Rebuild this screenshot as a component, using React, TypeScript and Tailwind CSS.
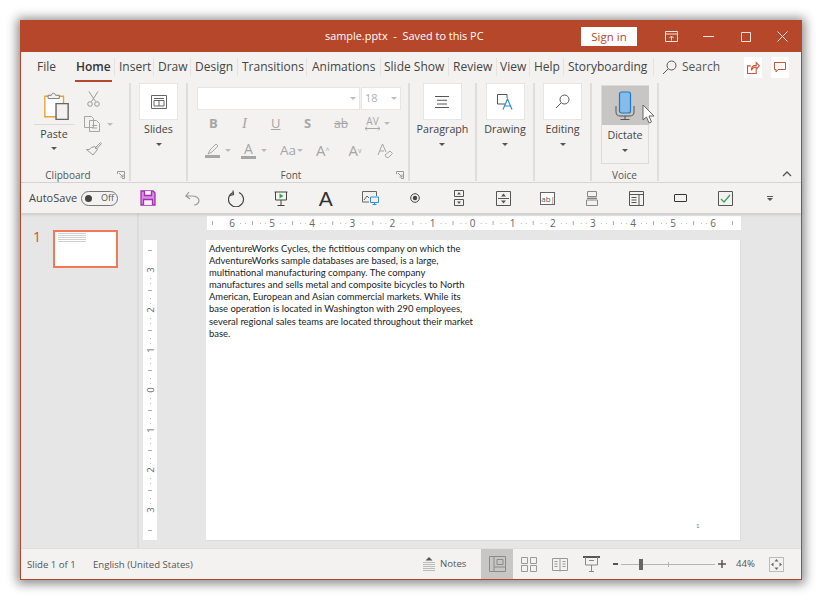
import type { ReactNode } from 'react';

const tabs = [
  { label: 'File', w: 'w-[48px]', pl: 'pl-[16px]' },
  { label: 'Home', w: 'w-[46px]', pl: 'pl-[7px]', active: true },
  { label: 'Insert', w: 'w-[39px]', pl: 'pl-[4px]' },
  { label: 'Draw', w: 'w-[37px]', pl: 'pl-[4px]' },
  { label: 'Design', w: 'w-[47px]', pl: 'pl-[4px]' },
  { label: 'Transitions', w: 'w-[69px]', pl: 'pl-[4px]' },
  { label: 'Animations', w: 'w-[74px]', pl: 'pl-[5px]' },
  { label: 'Slide Show', w: 'w-[68px]', pl: 'pl-[3px]' },
  { label: 'Review', w: 'w-[48px]', pl: 'pl-[4px]' },
  { label: 'View', w: 'w-[33px]', pl: 'pl-[3px]' },
  { label: 'Help', w: 'w-[34px]', pl: 'pl-[4px]' },
  { label: 'Storyboarding', w: 'w-[90px]', pl: 'pl-[4px]' },
];

const slideLines = [
  'AdventureWorks Cycles, the fictitious company on which the',
  'AdventureWorks sample databases are based, is a large,',
  'multinational manufacturing company. The company',
  'manufactures and sells metal and composite bicycles to North',
  'American, European and Asian commercial markets. While its',
  'base operation is located in Washington with 290 employees,',
  'several regional sales teams are located throughout their market',
  'base.',
];

function Caret({ className = '' }: { className?: string }) {
  return <span className={`inline-block w-0 h-0 border-x-[3px] border-x-transparent border-t-[3px] border-t-[#555] ${className}`} />;
}

function BigButton({ label, icon }: { label: string; icon: ReactNode }) {
  return (
    <div className="flex flex-col items-center">
      <div className="w-[39px] h-[37px] bg-white border border-[#e6e5e3] flex items-center justify-center">{icon}</div>
      <div className="mt-[1px] text-[10.7px] leading-[16px] text-[#444]">{label}</div>
      <Caret className="mt-[6px]" />
    </div>
  );
}

function Group({ w, label, children, launcher, labelClass = '' }: { w: string; label: string; children: ReactNode; launcher?: boolean; labelClass?: string }) {
  return (
    <div className={`${w} h-[98px] mt-[1px] relative flex flex-col border-r-2 border-[#dedddb]`}>
      <div className="flex-1 min-h-0">{children}</div>
      <div className={`h-[18px] pt-[4px] text-center text-[10px] leading-[16px] text-[#555] ${labelClass}`}>{label}</div>
      {launcher && (
        <svg className="absolute right-[4px] bottom-[2px]" width="8" height="8" viewBox="0 0 8 8" fill="none" stroke="#999">
          <path d="M.5 3V.5H7.5V7.5H5M2 2l4 4M6 3.5V6H3.5" />
        </svg>
      )}
    </div>
  );
}

function Qat({ children }: { children: ReactNode }) {
  return <div className="w-[44.4px] h-full flex items-center justify-center shrink-0">{children}</div>;
}

function HorizontalRuler() {
  const nums = [6, 5, 4, 3, 2, 1, 0, 1, 2, 3, 4, 5, 6];
  const ticks: ReactNode[] = [];
  for (let i = 0; i < 13; i++) {
    const x = 25 + i * 40.1;
    ticks.push(<text key={`n${i}`} x={x} y="10.5" textAnchor="middle" fontSize="10" fill="#666">{nums[i]}</text>);
    if (i < 12) {
      ticks.push(<rect key={`h${i}`} x={x + 20} y="5" width="1" height="4" fill="#aaa" />);
      [8, 13, 28, 33].forEach((d) => ticks.push(<rect key={`d${i}-${d}`} x={x + d} y="7" width="1" height="1" fill="#bbb" />));
    }
  }
  return (
    <svg width="534" height="14" className="bg-white block font-['Open_Sans',sans-serif]">
      {ticks}
      <rect x="5" y="5" width="1" height="4" fill="#aaa" />
      <rect x="525" y="5" width="1" height="4" fill="#aaa" />
    </svg>
  );
}

function VerticalRuler() {
  const nums = [3, 2, 1, 0, 1, 2, 3];
  const ticks: ReactNode[] = [];
  for (let i = 0; i < 7; i++) {
    const y = 30 + i * 40;
    ticks.push(<text key={`n${i}`} x="0" y="0" transform={`translate(10.5 ${y}) rotate(-90)`} textAnchor="middle" fontSize="9.5" fill="#666">{nums[i]}</text>);
    if (i < 6) {
      ticks.push(<rect key={`h${i}`} x="5" y={y + 20} width="4" height="1" fill="#aaa" />);
      [8, 13, 28, 33].forEach((d) => ticks.push(<rect key={`d${i}-${d}`} x="7" y={y + d} width="1" height="1" fill="#bbb" />));
    }
  }
  return (
    <svg width="14" height="300" className="bg-white block font-['Open_Sans',sans-serif]">
      {ticks}
      <rect x="5" y="10" width="4" height="1" fill="#aaa" />
      <rect x="5" y="290" width="4" height="1" fill="#aaa" />
    </svg>
  );
}

export default function App() {
  return (
    <div className="w-[822px] h-[600px] bg-white pt-[20px] pl-[20px] font-['Open_Sans',sans-serif] overflow-hidden">
      <div className="w-[782px] h-[560px] flex flex-col bg-[#f3f2f1] border border-[#b7472a] border-t-0 shadow-[0_1px_10px_3px_rgba(0,0,0,0.45)]">
        {/* title bar */}
        <div className="h-[32px] shrink-0 bg-[#b7472a] flex items-center text-white">
          <div className="ml-[304px] w-[236px] text-[10.9px] whitespace-pre">sample.pptx  -  Saved to this PC</div>
          <div className="ml-[20px] w-[56px] h-[19px] bg-white text-[#b7472a] text-[11.5px] leading-[19px] text-center">Sign in</div>
          <div className="ml-[16px] flex">
            <div className="w-[37px] flex justify-center">
              <svg width="13" height="11" viewBox="0 0 13 11" fill="none" stroke="#f6e3dd">
                <path d="M.5.5h12v10H.5zM.5 3h12M6.5 9.5V5M4.5 7l2-2 2 2" />
              </svg>
            </div>
            <div className="w-[37px] flex justify-center">
              <svg width="11" height="11" viewBox="0 0 11 11" stroke="#f6e3dd"><path d="M0 5.5h11" /></svg>
            </div>
            <div className="w-[37px] flex justify-center">
              <svg width="11" height="11" viewBox="0 0 11 11" fill="none" stroke="#f6e3dd"><path d="M1.5 1.5h9v9h-9z" /></svg>
            </div>
            <div className="w-[37px] flex justify-center">
              <svg width="11" height="11" viewBox="0 0 11 11" stroke="#f6e3dd"><path d="M.5.5l10 10M10.500.5l-10 10" /></svg>
            </div>
          </div>
        </div>

        {/* tabs */}
        <div className="h-[30px] shrink-0 flex items-center text-[12px] text-[#444]">
          {tabs.map((t) => (
            <div key={t.label} className={`${t.w} ${t.pl} h-[18px] shrink-0 relative leading-[18px] whitespace-nowrap ${t.active ? 'font-semibold text-[#333]' : ''} ${t.label !== 'File' ? 'border-r border-[#e4e3e1]' : ''}`}>
              {t.label}
              {t.active && <div className="absolute left-[6px] w-[37px] top-[22px] h-[2px] bg-[#b7472a]" />}
            </div>
          ))}
          <svg className="ml-[8px]" width="15" height="15" viewBox="0 0 15 15" fill="none" stroke="#555">
            <circle cx="9.5" cy="5.5" r="4.5" />
            <path d="M6 9l-5 5" />
          </svg>
          <span className="ml-[5px] w-[62px] text-[#555]">Search</span>
          <div className="w-[18px] h-[21px] bg-white flex items-center justify-center">
            <svg width="13" height="13" viewBox="0 0 12 12" fill="none" stroke="#c9553a">
              <path d="M3.5 4.5H.5v7h8V8M4 8.5c0-3 2-4.5 4.5-4.5V1.500l3 3-3 3V5.500C6.500 5.500 5 6.500 4 8.500z" />
            </svg>
          </div>
          <div className="ml-[9px] w-[18px] h-[21px] bg-white flex items-center justify-center">
            <svg width="12" height="12" viewBox="0 0 12 12" fill="none" stroke="#c9553a">
              <path d="M.5 1.500h11v7H4l-2 2.500V8.500H.5z" />
            </svg>
          </div>
        </div>

        {/* ribbon */}
        <div className="h-[101px] shrink-0 flex items-start relative border-b border-[#d5d4d2]">
          <Group w="w-[110px]" label="Clipboard" launcher labelClass="pr-[14px]">
            <div className="flex">
              <div className="w-[42px] ml-[12px] flex flex-col items-center">
                <svg className="mt-[9px] ml-[5px]" width="27" height="28" viewBox="0 0 28 30" fill="none">
                  <path d="M1.500 4.500h20v22h-20z" stroke="#e8a33a" strokeWidth="1.500" fill="#fff" />
                  <path d="M5 7V3.500h3.500C9 .5 12 .5 13 3.500h4V7z" stroke="#777" fill="#f3f2f1" />
                  <path d="M13.500 12.500h13v17h-13z" stroke="#666" strokeWidth="1.500" fill="#f3f2f1" />
                </svg>
                <div className="w-[41px] mt-[4px] border-t border-[#dcdbd9] pt-[1px] text-center text-[10.7px] leading-[16px] text-[#444]">Paste</div>
                <Caret className="mt-[5px]" />
              </div>
              <div className="ml-[10px] flex flex-col items-start">
                <svg className="mt-[8px] ml-[2px]" width="13" height="16" viewBox="0 0 13 16" fill="none" stroke="#999">
                  <path d="M2 .5l6.500 10M11 .5L4.500 10.500" />
                  <circle cx="3" cy="13" r="2.300" />
                  <circle cx="10" cy="13" r="2.300" />
                </svg>
                <div className="flex items-center mt-[9px]">
                  <svg className="-ml-[1px]" width="17" height="16" viewBox="0 0 17 16" fill="none" stroke="#a5a5a5">
                    <path d="M.5.5h7l2 2v9h-9zM5.500 4.500h7l3 3v8h-10zM8 9.500h5M8 12h5" />
                  </svg>
                  <Caret className="ml-[6px] border-t-[#bbb]" />
                </div>
                <svg className="mt-[9px] ml-[1px]" width="16" height="15" viewBox="0 0 16 15" fill="none" stroke="#999">
                  <path d="M9 7l5.500-5.500 1 1-5 5.500zM9 5.500l2.500 3-4.500 5.500L.5 8.500c2 .5 4-.5 5-2z" />
                </svg>
              </div>
            </div>
          </Group>
          <Group w="w-[57px]" label="">
            <div className="flex justify-center">
              <BigButton
                label="Slides"
                icon={
                  <svg width="16" height="14" viewBox="0 0 16 14" fill="none" stroke="#666">
                    <path d="M.5.5h15v13H.5z" />
                    <path d="M3 3.500h10M3 5.500h10V11H3zM8 5.500V11" />
                  </svg>
                }
              />
            </div>
          </Group>
          <Group w="w-[222px]" label="Font" launcher labelClass="pr-[14px]">
            <div className="pl-[9px] pt-[4px]">
              <div className="flex gap-[1px]">
                <div className="w-[163px] h-[23px] bg-white border border-[#e6e5e3] flex items-center justify-end pr-[3px]">
                  <Caret className="border-t-[#bbb]" />
                </div>
                <div className="w-[40px] h-[23px] bg-white border border-[#e6e5e3] flex items-center justify-between px-[3px] text-[11px] text-[#b0b0b0]">
                  18
                  <Caret className="border-t-[#bbb]" />
                </div>
              </div>
              <div className="flex items-center h-[27px] text-[13px] text-[#a6a6a6]">
                <span className="w-[10px] ml-[12px] font-bold">B</span>
                <span className="w-[10px] ml-[23px] text-[15px] italic font-['Liberation_Serif',serif]">I</span>
                <span className="w-[10px] ml-[19px] underline">U</span>
                <span className="w-[10px] ml-[23px] font-bold">S</span>
                <span className="ml-[20px] text-[12px] line-through">ab</span>
                <span className="ml-[17px] flex flex-col items-center text-[10px] leading-[10px]">
                  AV
                  <svg width="15" height="5" viewBox="0 0 15 5" fill="none" stroke="#a6a6a6"><path d="M0 2.500h15M2 .5l-2 2 2 2M13 .5l2 2-2 2" /></svg>
                </span>
                <Caret className="ml-[4px] border-t-[#bbb]" />
              </div>
              <div className="flex items-center h-[27px] text-[#a6a6a6]">
                <div className="ml-[8px] flex flex-col items-center">
                  <svg width="15" height="12" viewBox="0 0 15 12" fill="none" stroke="#a6a6a6"><path d="M3 11l2-4 6-6 2 2-6 6z" /></svg>
                  <div className="w-[15px] h-[3px] bg-[#a6a6a6]" />
                </div>
                <Caret className="ml-[5px] border-t-[#bbb]" />
                <div className="ml-[10px] flex flex-col items-center leading-[12px] text-[14px]">
                  A
                  <div className="w-[15px] h-[3px] bg-[#a6a6a6] mt-[1px]" />
                </div>
                <Caret className="ml-[5px] border-t-[#bbb]" />
                <span className="ml-[13px] text-[13.5px]">Aa</span>
                <Caret className="ml-[1px] border-t-[#bbb]" />
                <span className="ml-[13px] text-[15px]">A<sup className="text-[7px]">^</sup></span>
                <span className="ml-[19px] text-[15px]">A<sup className="text-[7px]">v</sup></span>
                <svg className="ml-[15px]" width="16" height="15" viewBox="0 0 16 15" fill="none" stroke="#a6a6a6">
                  <path d="M1 12L5.500 1 9 9M3 8h4M8 12l5-4 2.500 2.500-4 4H9.500z" />
                </svg>
              </div>
            </div>
          </Group>
          <Group w="w-[67px]" label="">
            <div className="flex justify-center">
              <BigButton
                label="Paragraph"
                icon={
                  <svg width="14" height="12" viewBox="0 0 14 12" stroke="#555"><path d="M0 .5h14M2 4.250h10M2 8h10M0 11.500h14" /></svg>
                }
              />
            </div>
          </Group>
          <Group w="w-[58px]" label="">
            <div className="flex justify-center">
              <BigButton
                label="Drawing"
                icon={
                  <svg width="16" height="16" viewBox="0 0 16 16" fill="none">
                    <path d="M8 10H.5V.5H10V4" stroke="#555" />
                    <path d="M6 15.500L10.500 5l4.500 10.500M7.500 12h6" stroke="#2e8fd8" strokeWidth="1.200" />
                  </svg>
                }
              />
            </div>
          </Group>
          <Group w="w-[57px]" label="">
            <div className="flex justify-center">
              <BigButton
                label="Editing"
                icon={
                  <svg width="15" height="15" viewBox="0 0 15 15" fill="none" stroke="#555">
                    <circle cx="9.500" cy="5.500" r="4.500" />
                    <path d="M6 9l-5 5" />
                  </svg>
                }
              />
            </div>
          </Group>
          <Group w="w-[67px]" label="Voice">
            <div className="w-[48px] h-[79px] ml-[9px] mt-[2px] border border-[#dcdbd9] flex flex-col items-center">
              <div className="w-[47px] h-[39px] bg-[#c8c6c4] flex items-center justify-center">
                <svg width="20" height="30" viewBox="0 0 20 30" fill="none">
                  <rect x="4.500" y="1" width="11" height="21" rx="2" fill="#85bcec" stroke="#1f78c8" strokeWidth="1.200" />
                  <path d="M1 15v6c0 3 2 4 4 4h10c2 0 4-1 4-4v-6M10 25v3M5.500 28.500h9" stroke="#555" />
                </svg>
              </div>
              <div className="mt-[2px] text-[10.7px] leading-[16px] text-[#444]">Dictate</div>
              <Caret className="mt-[6px]" />
            </div>
          </Group>
          {/* cursor sits over the Dictate button */}
          <svg className="absolute left-[621px] top-[22px]" width="14" height="20" viewBox="0 0 14 20">
            <path d="M1 1v15l3.500-3 2.500 6 2.500-1-2.500-6h5z" fill="#fff" stroke="#666" />
          </svg>
          <svg className="absolute right-[9px] bottom-[5px]" width="10" height="6" viewBox="0 0 10 6" fill="none" stroke="#555" strokeWidth="1.300">
            <path d="M1 5l4-4 4 4" />
          </svg>
        </div>

        {/* quick access */}
        <div className="h-[30px] shrink-0 flex items-center shadow-[0_2px_3px_rgba(0,0,0,0.12)] z-10 relative">
          <span className="ml-[8px] w-[52px] text-[11px] text-[#444]">AutoSave</span>
          <div className="w-[37px] h-[15px] rounded-full border border-[#777] flex items-center justify-between pl-[3px] pr-[3px] text-[9px] text-[#555]">
            <span className="w-[7px] h-[7px] rounded-full bg-[#444]" />
            Off
          </div>
          <div className="ml-[8px] flex h-full">
            <Qat>
              <svg width="16" height="16" viewBox="0 0 16 16" fill="#d98ee0" stroke="#a52eb5" strokeWidth="1.300">
                <path d="M1 1h12l2 2v12H1z" />
                <path d="M4.500 1v4.500h7V1M3.500 15V9.500h9V15" fill="#f3f2f1" />
              </svg>
            </Qat>
            <Qat>
              <svg width="15" height="15" viewBox="0 0 15 15" fill="none" stroke="#999" strokeWidth="1.200">
                <path d="M4 1L1 5h6C11 5 14 7 14 9.500S11.500 14 9 14M1 5l4 3" />
              </svg>
            </Qat>
            <Qat>
              <svg width="17" height="17" viewBox="0 0 17 17" fill="none" stroke="#444" strokeWidth="1.200">
                <path d="M11 2.500a7.500 7.500 0 1 1-6 0M5 .5l.5 4-3.500 1" />
              </svg>
            </Qat>
            <Qat>
              <svg width="14" height="15" viewBox="0 0 14 15" fill="none" stroke="#444">
                <path d="M.5 1h13M1.500 1v8h11V1M7 9v5M3.500 14.500h7" />
                <path d="M5.500 2.500l4 2.500-4 2.500z" fill="#2da84a" stroke="none" />
              </svg>
            </Qat>
            <Qat>
              <span className="text-[21px] leading-none text-[#333] font-['Liberation_Sans',sans-serif]">A</span>
            </Qat>
            <Qat>
              <svg width="17" height="14" viewBox="0 0 17 14" fill="none">
                <path d="M7 11H.5V.5h14V5M2 9l3-4 2 2" stroke="#666" />
                <path d="M8.500 6h8v5.500h-8zM12.500 11.500v2M10.500 13.500h4" stroke="#2e8fd8" />
              </svg>
            </Qat>
            <Qat>
              <svg width="10" height="10" viewBox="0 0 10 10">
                <circle cx="5" cy="5" r="4.300" fill="none" stroke="#444" />
                <circle cx="5" cy="5" r="2.200" fill="#444" />
              </svg>
            </Qat>
            <Qat>
              <svg width="10" height="16" viewBox="0 0 10 16" fill="none" stroke="#555">
                <path d="M.5.5h9v6h-9zM.5 9.500h9v6h-9z" />
                <path d="M5 2L3 4.500h4zM5 14L3 11.500h4z" fill="#555" stroke="none" />
              </svg>
            </Qat>
            <Qat>
              <svg width="15" height="15" viewBox="0 0 15 15" fill="none" stroke="#555">
                <path d="M.5.5h14v14H.5zM2 7.500h11" />
                <path d="M7.500 2.500L5 5.500h5zM7.500 12.500L5 9.500h5z" fill="#555" stroke="none" />
              </svg>
            </Qat>
            <Qat>
              <div className="w-[15px] h-[13px] border border-[#666] bg-white text-[8px] leading-[11px] text-center text-[#555]">ab|</div>
            </Qat>
            <Qat>
              <svg width="12" height="15" viewBox="0 0 12 15" fill="none" stroke="#888">
                <path d="M1.500.5h9v5h-9zM.5 9h11v5.500H.5z" />
                <path d="M1 7.200h10" stroke="#555" />
              </svg>
            </Qat>
            <Qat>
              <svg width="15" height="15" viewBox="0 0 15 15" fill="none" stroke="#555">
                <path d="M.5.5h14v14H.5zM.5 3.500h14M10 3.500v11M2.500 6.500h5M2.500 9h5M2.500 11.500h5" />
              </svg>
            </Qat>
            <Qat>
              <div className="w-[13px] h-[8px] border-[1.500px] border-[#333] rounded-[1px]" />
            </Qat>
            <Qat>
              <svg width="15" height="15" viewBox="0 0 15 15" fill="none">
                <path d="M.5.5h14v14H.5z" stroke="#555" />
                <path d="M3 8l3 3 6-7" stroke="#2da84a" strokeWidth="1.200" />
              </svg>
            </Qat>
            <Qat>
              <div className="flex flex-col items-center gap-[1px]">
                <div className="w-[6px] h-[1px] bg-[#555]" />
                <Caret className="border-x-[3px]" />
              </div>
            </Qat>
          </div>
        </div>

        {/* workspace */}
        <div className="flex-1 min-h-0 flex bg-[#e6e6e6]">
          <div className="w-[118px] shrink-0 border-r-2 border-[#dcdcdc] flex items-start pt-[17px]">
            <span className="w-[32px] pl-[12px] text-[14px] leading-[14px] text-[#d2502f]">1</span>
            <div className="w-[65px] h-[38px] bg-white border-2 border-[#f0795a] pl-[3px] pt-[1px]">
              <div className="w-[28px] h-[10px] bg-[repeating-linear-gradient(180deg,#d0d0d0_0,#d0d0d0_1px,#fff_1px,#fff_2px)]" />
            </div>
          </div>
          <div className="w-[662px] shrink-0 pl-[4px] pt-[3px]">
            <div className="ml-[64px]"><HorizontalRuler /></div>
            <div className="flex mt-[10px]">
              <VerticalRuler />
              <div className="ml-[49px] w-[535px] h-[301px] bg-white border-r border-b border-[#dcdcdc] relative pt-[3px] pl-[3px] font-['Lato',sans-serif] text-[9.45px] leading-[12.1px] text-[#222]">
                {slideLines.map((l) => (
                  <div key={l} className="whitespace-nowrap">{l}</div>
                ))}
                <span className="absolute left-[490px] top-[282px] text-[6px] leading-[8px] text-[#777]">1</span>
              </div>
            </div>
          </div>
        </div>

        {/* status bar */}
        <div className="h-[31px] shrink-0 flex items-center border-t border-[#e0dfdd] text-[9.6px] text-[#555]">
          <span className="ml-[6px] mt-[3px] w-[66px]">Slide 1 of 1</span>
          <span className="mt-[3px] w-[330px]">English (United States)</span>
          <svg width="12" height="15" viewBox="0 0 12 15" fill="none">
            <path d="M6 0l3.500 3.500h-7z" fill="#555" />
            <path d="M0 5.500h12M0 7.500h12M0 9.500h12M0 11.500h12M0 13.500h12" stroke="#bbb" />
          </svg>
          <span className="ml-[5px] mt-[1px] w-[41px]">Notes</span>
          <div className="w-[32px] h-full bg-[#c8c6c4] flex items-center justify-center">
            <svg width="17" height="16" viewBox="0 0 17 16" fill="none" stroke="#8a8a8a">
              <path d="M.5.5h16v15H.5zM5 .5v15M5 11h11.500M8 3.500h6v5H8z" />
            </svg>
          </div>
          <div className="w-[31px] flex justify-center">
            <svg width="16" height="15" viewBox="0 0 16 15" fill="none" stroke="#999">
              <path d="M.5.5h6v6h-6zM9.500.5h6v6h-6zM.5 8.500h6v6h-6zM9.500 8.500h6v6h-6z" />
            </svg>
          </div>
          <div className="w-[32px] flex justify-center">
            <svg width="16" height="15" viewBox="0 0 16 15" fill="none" stroke="#999">
              <path d="M.5 1.500h15v12H.5zM8 1.500v13M2.500 4.500h3M2.500 7h3M2.500 9.500h3M10.500 4.500h3M10.500 7h3M10.500 9.500h3" />
            </svg>
          </div>
          <div className="w-[31px] flex justify-center">
            <svg width="17" height="16" viewBox="0 0 17 16" fill="none" stroke="#888">
              <path d="M0 1h17" stroke="#555" strokeWidth="2" />
              <path d="M2.500 1v8h12V1M8.500 9v6M6 15.500h5M6 4.500h5" />
            </svg>
          </div>
          <div className="ml-[6px] w-[5px] h-[2px] bg-[#555]" />
          <div className="ml-[3px] w-[94px] h-[1px] bg-[#b5b5b5] relative">
            <div className="absolute left-[18px] top-[-5px] w-[4px] h-[11px] bg-[#666]" />
            <div className="absolute left-[47px] top-[-2px] w-[1px] h-[5px] bg-[#b5b5b5]" />
          </div>
          <svg className="ml-[3px]" width="8" height="8" viewBox="0 0 8 8" stroke="#555" strokeWidth="1.500"><path d="M0 4h8M4 0v8" /></svg>
          <span className="ml-[10px] mt-[1px] w-[26px]">44%</span>
          <div className="ml-[7px] w-[15px] h-[15px] border border-[#bbb] flex items-center justify-center">
            <svg width="13" height="13" viewBox="0 0 13 13" fill="#666"><path d="M6.500 1l2 2.500h-4zM6.500 12l2-2.500h-4zM1 6.500l2.500-2v4zM12 6.500l-2.500-2v4z" /></svg>
          </div>
        </div>
      </div>
    </div>
  );
}
